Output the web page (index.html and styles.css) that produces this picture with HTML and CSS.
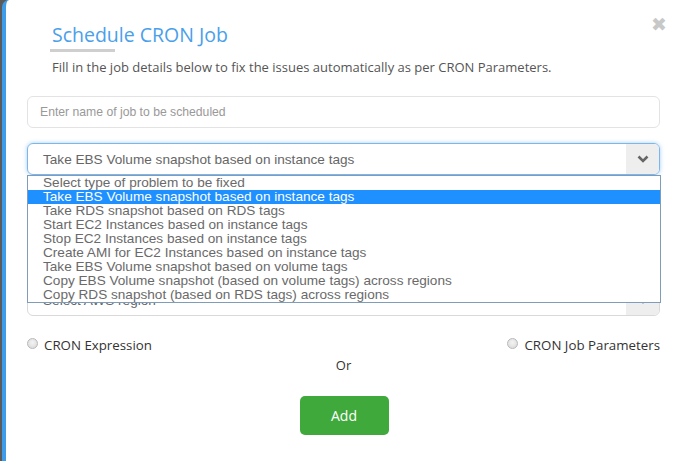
FILE: index.html
```html
<!DOCTYPE html>
<html>
<head>
<meta charset="utf-8">
<link rel="stylesheet" href="styles.css">
</head>
<body>
<div class="modal">
  <button class="close" aria-label="Close">&#x2716;</button>
  <div class="header">
    <h1 class="title">Schedule CRON Job</h1>
    <div class="rule"></div>
    <p class="subtitle">Fill in the job details below to fix the issues automatically as per CRON Parameters.</p>
  </div>
  <div class="form">
    <div class="field input">Enter name of job to be scheduled</div>
    <div class="select-wrap">
      <div class="field select focused">
        <span class="value">Take EBS Volume snapshot based on instance tags</span>
        <span class="caret"><svg width="12" height="8" viewBox="0 0 12 8"><path d="M1.5 1.5 L6 6 L10.5 1.5" fill="none" stroke="#666" stroke-width="2.6"/></svg></span>
      </div>
      <ul class="dropdown">
        <li>Select type of problem to be fixed</li>
        <li class="active">Take EBS Volume snapshot based on instance tags</li>
        <li>Take RDS snapshot based on RDS tags</li>
        <li>Start EC2 Instances based on instance tags</li>
        <li>Stop EC2 Instances based on instance tags</li>
        <li>Create AMI for EC2 Instances based on instance tags</li>
        <li>Take EBS Volume snapshot based on volume tags</li>
        <li>Copy EBS Volume snapshot (based on volume tags) across regions</li>
        <li>Copy RDS snapshot (based on RDS tags) across regions</li>
      </ul>
    </div>
    <div class="field select region">
      <span class="value">Select AWS region</span>
      <span class="caret"><svg width="12" height="8" viewBox="0 0 12 8"><path d="M1.5 1.5 L6 6 L10.5 1.5" fill="none" stroke="#666" stroke-width="2.6"/></svg></span>
    </div>
    <div class="radios">
      <label class="radio"><span class="dot"></span>CRON Expression</label>
      <label class="radio"><span class="dot"></span>CRON Job Parameters</label>
    </div>
    <div class="or">Or</div>
    <div class="actions"><button class="add">Add</button></div>
  </div>
</div>
</body>
</html>
```
FILE: styles.css
```css
* { box-sizing: border-box; }
html, body { margin: 0; padding: 0; }
body {
  background: #5b5b5b;
  width: 678px;
  height: 461px;
  overflow: hidden;
  font-family: "Liberation Sans", Arial, sans-serif;
}
.modal {
  position: relative;
  margin-left: 2px;
  height: 461px;
  background: #fff;
  border-left: 4px solid #3f9ce9;
  border-top-left-radius: 7px;
  padding: 0 18px 0 21px;
}
.close {
  position: absolute;
  top: 13px;
  right: 11px;
  border: 0;
  background: none;
  color: #c8c8c8;
  font-size: 19px;
  line-height: 22px;
  font-weight: bold;
  padding: 0;
  font-family: "DejaVu Sans", sans-serif;
}
.header { padding: 22px 0 0 25px; }
.title {
  margin: 0;
  font-family: "Open Sans", sans-serif;
  font-weight: 400;
  font-size: 19.5px;
  line-height: 25px;
  color: #4aa0eb;
}
.rule {
  width: 65px;
  height: 3px;
  background: #cfcfcf;
  margin: 2px 0 0 -2px;
}
.subtitle {
  margin: 6px 0 0;
  font-family: "Open Sans", sans-serif;
  font-size: 13px;
  line-height: 18px;
  color: #555;
}
.form { padding-top: 20px; }
.field {
  height: 32px;
  border: 1px solid #e3e3e3;
  border-radius: 6px;
  display: flex;
  align-items: center;
  font-size: 12.2px;
  color: #999;
}
.input { padding-left: 12px; }
.select-wrap { position: relative; margin-top: 15px; }
.select { padding-left: 15px; font-size: 13.6px; color: #666; overflow: hidden; }
.select .value { flex: 1; }
.caret {
  width: 33px;
  align-self: stretch;
  background: #eeeeee;
  display: flex;
  align-items: center;
  justify-content: center;
}
.focused {
  border-color: #7db6ec;
  box-shadow: 0 0 4px rgba(102, 175, 233, 0.6);
}
.dropdown {
  position: absolute;
  top: 32px;
  left: 0;
  width: 634px;
  margin: 0;
  padding: 0;
  list-style: none;
  background: #fff;
  border: 1px solid #7f9db9;
  z-index: 2;
}
.dropdown li {
  height: 14px;
  line-height: 14px;
  padding-left: 15px;
  font-size: 13.6px;
  color: #6a6a6a;
  white-space: nowrap;
}
.dropdown li.active { background: #1e90ff; color: #fff; }
.region { margin-top: 109px; border-color: #d9d9d9; }
.radios {
  display: flex;
  justify-content: space-between;
  margin-top: 20px;
  font-family: "Open Sans", sans-serif;
  font-size: 13.3px;
  color: #333;
}
.radio { display: flex; align-items: center; gap: 6px; }
.dot {
  width: 11px;
  height: 11px;
  border-radius: 50%;
  border: 1px solid #b8b8b8;
  background: radial-gradient(circle at 50% 40%, #f4f4f4, #d6d6d6);
  margin-top: -4px;
}
.or {
  text-align: center;
  margin-top: 2px;
  font-family: "Open Sans", sans-serif;
  font-size: 13px;
  color: #333;
}
.actions { display: flex; justify-content: center; margin-top: 22px; }
.add {
  width: 89px;
  height: 39px;
  border: 0;
  border-radius: 5px;
  background: #40a93b;
  color: #fff;
  font-family: "Open Sans", sans-serif;
  font-size: 14px;
  margin-left: 1px;
}
```
